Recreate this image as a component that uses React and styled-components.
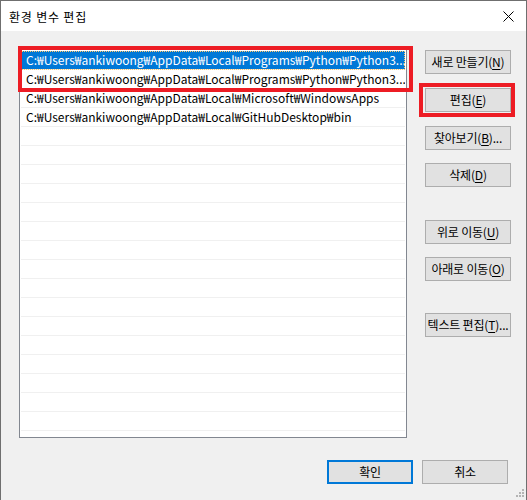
import React from 'react';
import styled, { createGlobalStyle } from 'styled-components';

const GlobalStyle = createGlobalStyle`
    html, body {
        margin: 0;
        padding: 0;
        background: #f0f0f0;
    }
    body {
        font-family: "Noto Sans CJK KR", "Noto Sans", sans-serif;
        font-size: 12px;
    }
`

const Window = styled.div`
    width: 527px;
    height: 500px;
    box-sizing: border-box;
    border: 1px solid #6f6f6f;
    border-bottom: none;
    background: #f0f0f0;
    display: flex;
    flex-direction: column;
    position: relative;
`

const TitleBar = styled.div`
    height: 30px;
    background: #fff;
    display: flex;
    align-items: center;
    justify-content: space-between;
    padding: 0 12px 0 8px;
`

const Title = styled.span`
    font-size: 12px;
    letter-spacing: 0.8px;
    color: #000;
`

const Body = styled.div`
    flex: 1;
    display: flex;
    flex-direction: column;
    padding: 17px 14px 0 18px;
`

const Main = styled.div`
    display: flex;
    gap: 18px;
`

const List = styled.div`
    width: 388px;
    height: 390px;
    box-sizing: border-box;
    border: 1px solid #828790;
    background: #fff;
    padding: 2px 1px;
`

const Row = styled.div`
    height: 18px;
    line-height: 18px;
    border-bottom: 1px solid #f0f0f0;
    padding: 0 2px 0 5px;
    white-space: nowrap;
    overflow: hidden;
    color: ${p => (p.selected ? '#fff' : '#000')};
    background: ${p => (p.selected ? '#0078d7' : '#fff')};
    outline: ${p => (p.selected ? '1px dotted #ffc66b' : 'none')};
    outline-offset: -1px;
`

const Highlight = styled.div`
    position: relative;
    &::after {
        content: '';
        position: absolute;
        inset: ${p => p.inset};
        border: 4px solid #ed1c24;
        pointer-events: none;
    }
`

const Side = styled.div`
    display: flex;
    flex-direction: column;
    padding-top: 2px;
    width: 86px;
`

const Button = styled.button`
    width: 86px;
    height: 24px;
    margin-top: ${p => p.top || 0}px;
    box-sizing: border-box;
    padding: 0;
    background: #e1e1e1;
    border: ${p => (p.primary ? '2px solid #0078d7' : '1px solid #adadad')};
    font-family: "Noto Sans CJK KR", "Noto Sans", sans-serif;
    font-size: 12px;
    letter-spacing: -0.2px;
    color: #000;
    white-space: nowrap;
    text-align: center;
    line-height: 20px;
`

const Key = styled.u`
    text-underline-offset: 2px;
`

const Footer = styled.div`
    display: flex;
    justify-content: flex-end;
    gap: 9px;
    margin-top: 22px;
    padding-right: 4px;
`

const CloseIcon = () => (
    <svg width="11" height="11" viewBox="0 0 11 11">
        <path d="M0.5 0.5 L10.5 10.5 M10.5 0.5 L0.5 10.5" stroke="#000" strokeWidth="1" fill="none" />
    </svg>
)

const Grip = styled.svg`
    position: absolute;
    right: 2px;
    bottom: 1px;
`

const paths = [
    'C:₩Users₩ankiwoong₩AppData₩Local₩Programs₩Python₩Python3...',
    'C:₩Users₩ankiwoong₩AppData₩Local₩Programs₩Python₩Python3...',
    'C:₩Users₩ankiwoong₩AppData₩Local₩Microsoft₩WindowsApps',
    'C:₩Users₩ankiwoong₩AppData₩Local₩GitHubDesktop₩bin',
]

const label = (text, key, tail = '') => (
    <>
        {text}(<Key>{key}</Key>){tail}
    </>
)

export default function App() {
    const empty = Array.from({ length: 16 })
    return (
        <>
            <GlobalStyle />
            <Window>
                <TitleBar>
                    <Title>환경 변수 편집</Title>
                    <CloseIcon />
                </TitleBar>
                <Body>
                    <Main>
                        <List>
                            <Highlight inset="-5px -8px -3px -3px">
                                <Row selected>{paths[0]}</Row>
                                <Row>{paths[1]}</Row>
                            </Highlight>
                            <Row>{paths[2]}</Row>
                            <Row>{paths[3]}</Row>
                            {empty.map((_, i) => <Row key={i} />)}
                        </List>
                        <Side>
                            <Button>{label('새로 만들기', 'N')}</Button>
                            <Highlight inset="-5px -4px -5px -6px" style={{ marginTop: 14 }}>
                                <Button>{label('편집', 'E')}</Button>
                            </Highlight>
                            <Button top={14}>{label('찾아보기', 'B', '...')}</Button>
                            <Button top={13}>{label('삭제', 'D')}</Button>
                            <Button top={33}>{label('위로 이동', 'U')}</Button>
                            <Button top={13}>{label('아래로 이동', 'O')}</Button>
                            <Button top={32}>{label('텍스트 편집', 'T', '...')}</Button>
                        </Side>
                    </Main>
                    <Footer>
                        <Button primary>확인</Button>
                        <Button>취소</Button>
                    </Footer>
                </Body>
                <Grip width="10" height="10" viewBox="0 0 10 10">
                    {[[8, 0], [8, 3], [5, 3], [8, 6], [5, 6], [2, 6]].map(([x, y]) => (
                        <rect key={`${x}-${y}`} x={x} y={y} width="2" height="2" fill="#b4b4b4" />
                    ))}
                </Grip>
            </Window>
        </>
    )
}
